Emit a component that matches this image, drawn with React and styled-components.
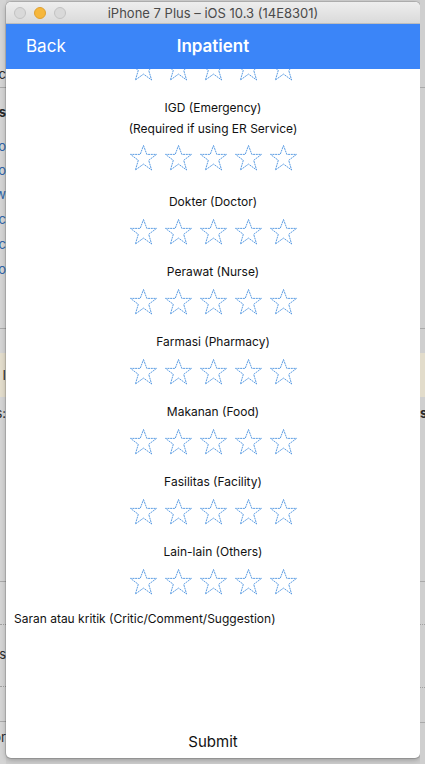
import styled, { createGlobalStyle } from "styled-components"

const GlobalStyle = createGlobalStyle`
    html, body {
        margin: 0;
        padding: 0;
        background: #c9c9c9;
    }
    * {
        box-sizing: border-box;
    }
`

const Desktop = styled.div`
    width: 425px;
    height: 764px;
    display: flex;
    overflow: hidden;
    background: #cdcdcd;
    font-family: Inter, Roboto, "Liberation Sans", sans-serif;
`

const Side = styled.div`
    width: ${p => p.$w}px;
    flex-shrink: 0;
    display: flex;
    flex-direction: column;
    overflow: hidden;
    background: ${p => p.$bg};
`

const SideRow = styled.div`
    height: ${p => p.$h}px;
    flex-shrink: 0;
    display: flex;
    align-items: center;
    justify-content: ${p => p.$align};
    white-space: nowrap;
    font-size: 13px;
    font-weight: ${p => (p.$bold ? 700 : 400)};
    color: ${p => (p.$blue ? "#2f64a8" : "#2a2a2a")};
    background: ${p => p.$bg || "transparent"};
    border-bottom: ${p => (p.$rule ? "1px solid #a9a9a9" : p.$dots ? "1px dotted #a0a0a0" : "none")};
`

const Window = styled.div`
    flex: 1;
    margin: 2px 0 6px;
    display: flex;
    flex-direction: column;
    border-radius: 5px;
    overflow: hidden;
    background: #fff;
    box-shadow: 0 0 0 1px rgba(0, 0, 0, 0.12), 0 2px 5px rgba(0, 0, 0, 0.25);
`

const TitleBar = styled.div`
    height: 22px;
    flex-shrink: 0;
    display: flex;
    align-items: center;
    padding-left: 8px;
    position: relative;
    background: linear-gradient(#eeeeee, #dadada);
    border-bottom: 1px solid #bdbdbd;
`

const Light = styled.span`
    width: 12px;
    height: 12px;
    border-radius: 50%;
    margin-right: 8px;
    background: ${p => p.$color};
    border: 1px solid ${p => p.$border};
`

const WindowTitle = styled.div`
    position: absolute;
    left: 0;
    right: 0;
    text-align: center;
    font-size: 13px;
    color: #4a4a4a;
    pointer-events: none;
`

const NavBar = styled.div`
    height: 45px;
    flex-shrink: 0;
    display: grid;
    grid-template-columns: 1fr auto 1fr;
    align-items: center;
    padding: 0 20px 1px;
    background: #3b85f8;
    color: #fff;
    font-size: 17px;
`

const BackButton = styled.div``

const NavTitle = styled.div`
    font-weight: 600;
`

const Sheet = styled.div`
    flex: 1;
    display: flex;
    flex-direction: column;
    overflow: hidden;
`

const Ratings = styled.div`
    display: flex;
    flex-direction: column;
    align-items: center;
    margin-top: -15px;
`

const Section = styled.div`
    display: flex;
    flex-direction: column;
    align-items: center;
    margin-top: 16px;
    margin-bottom: ${p => (p.$long ? 4 : 0)}px;
`

const Label = styled.div`
    height: 20px;
    line-height: 20px;
    font-size: 12px;
    color: #111;
    margin-bottom: ${p => (p.$extra ? 1 : 0)}px;
`

const Stars = styled.div`
    height: 28px;
    display: flex;
    gap: 6px;
    margin-top: ${p => p.$top}px;
`

const Comment = styled.div`
    margin-top: 13px;
    padding-left: 8px;
    font-size: 12px;
    line-height: 20px;
    color: #111;
`

const Spacer = styled.div`
    flex: 1;
`

const SubmitButton = styled.div`
    height: 32px;
    flex-shrink: 0;
    display: flex;
    align-items: center;
    justify-content: center;
    font-size: 15px;
    color: #111;
    padding-bottom: 1px;
`

const leftRows = [
    { h: 62 },
    { h: 24, t: "lc" },
    { h: 2, rule: true },
    { h: 13 },
    { h: 22, t: "s", bold: true },
    { h: 12 },
    { h: 22, t: "o", blue: true },
    { h: 25, t: "o", blue: true },
    { h: 24, t: "w", blue: true },
    { h: 25, t: "lc", blue: true },
    { h: 25, t: "lc", blue: true },
    { h: 25, t: "o", blue: true },
    { h: 48, rule: true },
    { h: 24 },
    { h: 44, t: "I", bg: "#e2dccb" },
    { h: 5 },
    { h: 22, t: "s:" },
    { h: 158, rule: true },
    { h: 43, dots: true },
    { h: 20 },
    { h: 18, t: "s" },
    { h: 24, dots: true },
    { h: 35, rule: true },
    { h: 4 },
    { h: 22, t: "or" },
]

const rightRows = [
    { h: 62 },
    { h: 26, rule: true },
    { h: 241, rule: true },
    { h: 24 },
    { h: 44, bg: "#e2dccb" },
    { h: 5 },
    { h: 22, t: "s", bold: true },
    { h: 158, rule: true },
    { h: 43, dots: true },
    { h: 63, dots: true },
    { h: 35, rule: true },
]

const sections = [
    { label: "IGD (Emergency)", sub: "(Required if using ER Service)" },
    { label: "Dokter (Doctor)" },
    { label: "Perawat (Nurse)" },
    { label: "Farmasi (Pharmacy)" },
    { label: "Makanan (Food)" },
    { label: "Fasilitas (Facility)" },
    { label: "Lain-lain (Others)" },
]

function Star() {
    return (
        <svg width="29" height="28" viewBox="0 0 29 28" fill="none">
            <polygon
                points="14.5,1.5 17.8,10.4 27.5,10.4 19.7,16.3 22.6,26 14.5,20.1 6.4,26 9.3,16.3 1.5,10.4 11.2,10.4"
                stroke="#4a92e0"
                strokeWidth="0.9"
                strokeLinejoin="miter"
                strokeDasharray="2 0.7"
            />
        </svg>
    )
}

function StarRow({ top }) {
    return (
        <Stars $top={top}>
            {[0, 1, 2, 3, 4].map(i => <Star key={i} />)}
        </Stars>
    )
}

function SideStrip({ rows, width, align, bg }) {
    return (
        <Side $w={width} $bg={bg}>
            {rows.map((r, i) => (
                <SideRow key={i} $h={r.h} $align={align} $bold={r.bold} $blue={r.blue} $bg={r.bg} $rule={r.rule} $dots={r.dots}>
                    {r.t}
                </SideRow>
            ))}
        </Side>
    )
}

export default function App() {
    return (
        <Desktop>
            <GlobalStyle />
            <SideStrip rows={leftRows} width={6} align="flex-end" bg="#d4d4d4" />
            <Window>
                <TitleBar>
                    <Light $color="#d9d9d9" $border="#c2c2c2" />
                    <Light $color="#f6b73c" $border="#dea032" />
                    <Light $color="#d9d9d9" $border="#c2c2c2" />
                    <WindowTitle>iPhone 7 Plus – iOS 10.3 (14E8301)</WindowTitle>
                </TitleBar>
                <NavBar>
                    <BackButton>Back</BackButton>
                    <NavTitle>Inpatient</NavTitle>
                    <span />
                </NavBar>
                <Sheet>
                    <Ratings>
                        <StarRow top={0} />
                        {sections.map(s => (
                            <Section key={s.label} $long={!!s.sub}>
                                <Label $extra={!!s.sub}>{s.label}</Label>
                                {s.sub && <Label>{s.sub}</Label>}
                                <StarRow top={s.sub ? 5 : 6} />
                            </Section>
                        ))}
                    </Ratings>
                    <Comment>Saran atau kritik (Critic/Comment/Suggestion)</Comment>
                    <Spacer />
                    <SubmitButton>Submit</SubmitButton>
                </Sheet>
            </Window>
            <SideStrip rows={rightRows} width={5} align="flex-start" bg="#cfcfcf" />
        </Desktop>
    )
}
